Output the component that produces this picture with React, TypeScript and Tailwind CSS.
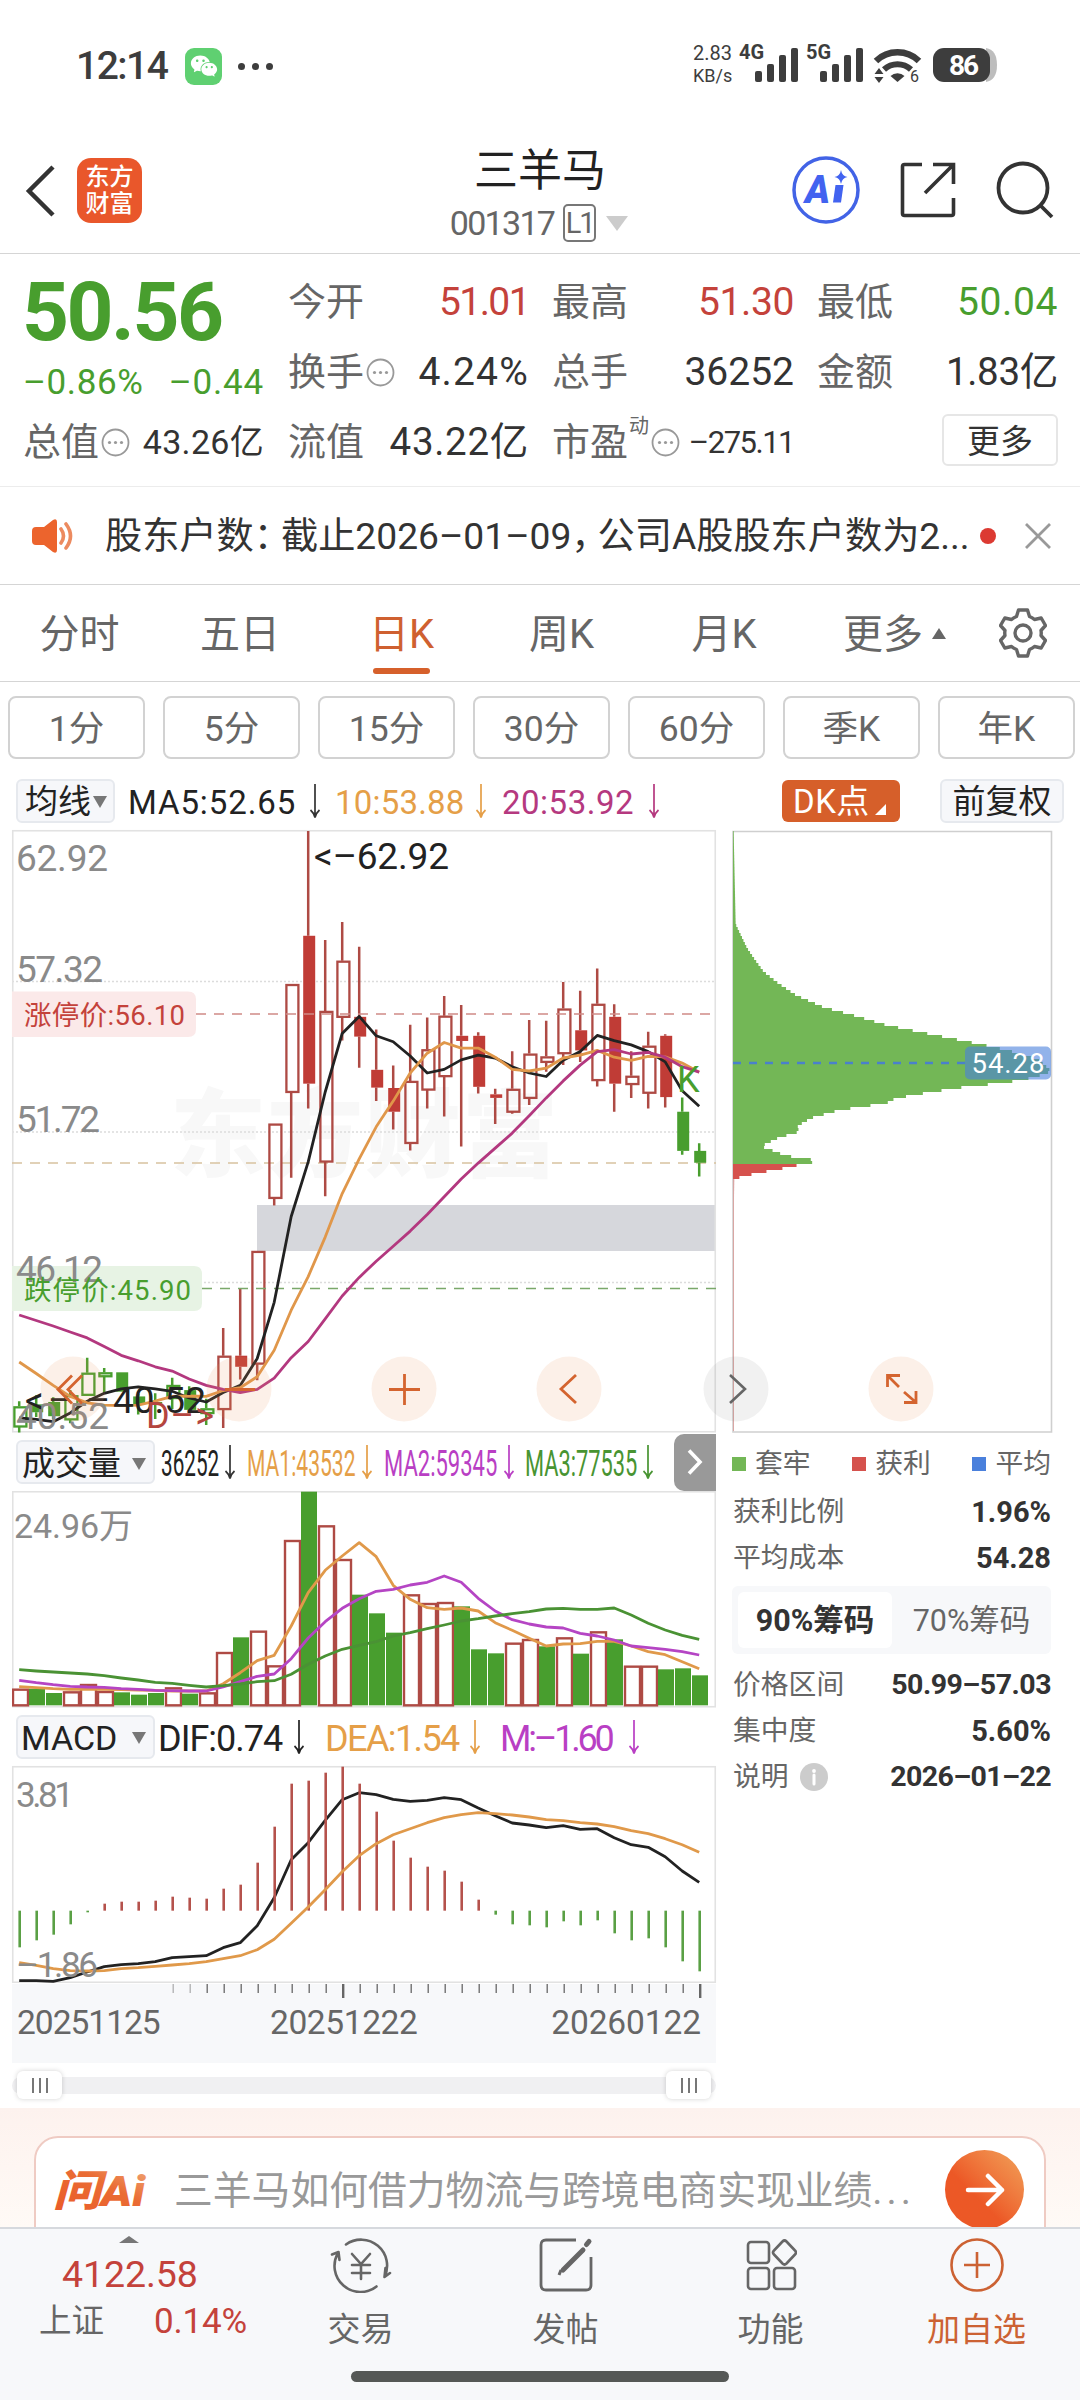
import React from 'react';
import { AiFillWechat } from 'react-icons/ai';

type Candle = [string, number, number, number, number];

// kind (u: hollow red, d: solid red, g: solid green, h: hollow green), high, body top, body bottom, low
const candles: Candle[] = [
  ['h', 1470, 1483, 1534, 1549],
  ['g', 1455, 1478, 1498, 1510],
  ['g', 1460, 1472, 1508, 1515],
  ['h', 1442, 1455, 1516, 1526],
  ['h', 1360, 1398, 1454, 1455],
  ['h', 1386, 1397, 1407, 1450],
  ['g', 1397, 1397, 1446, 1446],
  ['g', 1452, 1458, 1478, 1504],
  ['g', 1450, 1472, 1476, 1515],
  ['h', 1411, 1429, 1462, 1490],
  ['g', 1432, 1442, 1492, 1494],
  ['h', 1464, 1488, 1500, 1530],
  ['u', 1285, 1355, 1490, 1538],
  ['d', 1185, 1355, 1383, 1415],
  ['u', 1090, 1090, 1375, 1417],
  ['u', 768, 768, 956, 975],
  ['u', 415, 415, 688, 905],
  ['d', 28, 293, 667, 730],
  ['u', 304, 483, 864, 952],
  ['u', 258, 356, 498, 558],
  ['d', 321, 498, 548, 627],
  ['d', 530, 632, 677, 711],
  ['d', 621, 678, 738, 783],
  ['u', 518, 660, 817, 836],
  ['u', 500, 580, 682, 730],
  ['u', 445, 495, 648, 750],
  ['d', 468, 546, 559, 826],
  ['d', 537, 546, 675, 692],
  ['d', 680, 694, 703, 769],
  ['u', 585, 680, 738, 743],
  ['u', 506, 591, 703, 721],
  ['u', 508, 598, 612, 637],
  ['u', 410, 477, 590, 620],
  ['d', 432, 532, 583, 612],
  ['u', 376, 465, 658, 674],
  ['d', 466, 498, 667, 738],
  ['u', 585, 647, 668, 703],
  ['u', 536, 571, 690, 730],
  ['d', 542, 546, 701, 727],
  ['g', 702, 738, 837, 847],
  ['g', 818, 837, 867, 902],
];

const ma5 = [
  1512, 1516, 1522, 1500, 1470, 1450, 1439, 1434, 1439, 1445, 1462, 1472, 1448, 1430, 1362, 1220, 1003, 865, 688, 540,
  497, 546, 561, 597, 640, 631, 607, 595, 602, 624, 640, 649, 608, 586, 545, 558, 569, 586, 612, 685, 724,
];
const ma10 = [
  1371, 1400, 1430, 1458, 1474, 1480, 1481, 1480, 1470, 1458, 1457, 1458, 1443, 1436, 1408, 1341, 1240, 1155, 1055,
  945, 857, 776, 711, 640, 590, 563, 577, 577, 600, 631, 635, 628, 602, 595, 583, 600, 608, 598, 599, 615, 638,
];
const ma20 = [
  1252, 1266, 1280, 1295, 1310, 1332, 1354, 1368, 1383, 1394, 1414, 1430, 1440, 1448, 1440, 1412, 1360, 1319, 1262,
  1204, 1157, 1116, 1078, 1040, 998, 953, 908, 868, 830, 792, 748, 703, 660, 620, 586, 581, 592, 588, 600, 624, 638,
];

const volumes = [
  778, 778, 791, 786, 764, 785, 789, 796, 791, 774, 793, 789, 668, 624, 604, 708, 332, 187, 288, 389, 496, 552, 610,
  495, 521, 518, 531, 660, 672, 640, 629, 651, 624, 673, 606, 630, 709, 709, 720, 717, 738,
];
const volumeKinds = 'ugguuuggguguuguuuguuggguuuggguuguguguuggg';
const volMa1 = [
  772, 775, 778, 780, 780, 780, 781, 782, 783, 785, 785, 785, 763, 730, 694, 678, 590, 490, 423, 380, 340, 382, 468,
  510, 535, 540, 536, 545, 580, 603, 627, 650, 644, 643, 636, 636, 650, 667, 676, 697, 718,
];
const volMa2 = [
  753, 760, 766, 771, 773, 774, 778, 780, 783, 784, 785, 785, 773, 757, 741, 734, 688, 626, 577, 537, 508, 486, 480,
  467, 459, 440, 459, 507, 545, 571, 584, 593, 596, 612, 620, 632, 650, 655, 660, 667, 677,
];
const volMa3 = [
  721, 725, 728, 731, 734, 739, 746, 752, 759, 762, 768, 773, 769, 764, 757, 754, 735, 705, 680, 660, 648, 637, 620,
  610, 598, 587, 575, 568, 560, 553, 547, 539, 537, 540, 540, 536, 557, 582, 602, 618, 630,
];

const macd = [
  743, 722, 705, 674, 638, 612, 606, 606, 603, 591, 594, 597, 567, 555, 489, 381, 252, 243, 219, 201, 252, 336, 423,
  474, 501, 513, 546, 600, 645, 674, 677, 683, 665, 677, 662, 701, 722, 716, 743, 785, 815,
];
const dif = [
  843, 843, 845, 834, 817, 801, 795, 792, 786, 774, 771, 768, 744, 729, 678, 594, 480, 429, 362, 300, 279, 285, 299,
  305, 302, 294, 300, 325, 348, 370, 376, 384, 378, 389, 387, 414, 435, 443, 471, 514, 548,
];
const dea = [
  789, 797, 807, 813, 814, 813, 807, 804, 800, 796, 792, 786, 777, 768, 750, 719, 671, 622, 570, 516, 468, 432, 405,
  387, 369, 354, 345, 339, 342, 346, 352, 360, 363, 369, 373, 381, 393, 402, 417, 435, 458,
];

// cost distribution outline: [level, width]
const chips: [number, number][] = [
  [28, 2], [260, 8], [320, 42], [350, 66], [380, 92], [410, 137], [440, 190], [470, 272], [490, 360], [515, 460],
  [535, 575], [570, 780], [585, 852], [600, 912], [620, 940], [632, 955], [645, 912], [655, 862], [662, 800],
  [672, 692], [685, 590], [700, 490], [706, 474], [712, 462], [720, 400], [730, 320], [740, 277], [750, 235],
  [770, 194], [785, 198], [800, 137], [812, 107], [822, 84], [830, 112], [845, 157], [852, 208], [856, 242],
  [862, 242], [866, 210], [872, 182], [880, 135], [890, 70], [898, 30], [904, 4], [950, 3], [1547, 3],
];

const xAt = (i: number) => 7.2 + 17 * i;
const priceY = (v: number) => (v - 25.5) / 2.529;
const volY = (v: number) => (v - 185) / 3;
const macdY = (v: number) => (v - 199) / 3;

const toPoints = (values: number[], y: (v: number) => number) =>
  values.map((v, i) => `${xAt(i)},${y(v).toFixed(1)}`).join(' ');

const RED = '#c03c36';
const RED_LINE = '#ae4a44';
const GREEN = '#489e2e';

function Line({ values, y, color }: { values: number[]; y: (v: number) => number; color: string }) {
  return <polyline points={toPoints(values, y)} fill="none" stroke={color} strokeWidth="2.8" strokeLinejoin="round" />;
}

function StatusBar() {
  return (
    <div className="flex h-[110px] items-start pl-[76px] pr-[83px] pt-[46px] text-[#3d3d3d]">
      <div className="flex h-10 items-center">
        <span className="w-[109px] text-[39px] font-medium leading-none tracking-[-1.500px]">12:14</span>
        <span className="flex h-[37px] w-[37px] items-center justify-center rounded-[9px] bg-[#5fd071] text-white">
          <AiFillWechat size={30} />
        </span>
        <span className="ml-4 flex gap-[7px]">
          <i className="h-[7px] w-[7px] rounded-full bg-[#3d3d3d]" />
          <i className="h-[7px] w-[7px] rounded-full bg-[#3d3d3d]" />
          <i className="h-[7px] w-[7px] rounded-full bg-[#3d3d3d]" />
        </span>
      </div>
      <div className="ml-auto flex h-10 items-start">
        <div className="w-[46px]">
          <div className="text-[20px] leading-[15px]">2.83</div>
          <div className="mt-[7px] text-[18px] leading-[16px]">KB/s</div>
        </div>
        <svg width="258" height="40" viewBox="739 46 258 40" fill="#3d3d3d" className="overflow-visible">
          <text x="739" y="59" fontSize="20" fontWeight="700">4G</text>
          <rect x="755" y="71" width="7" height="11" rx="2" />
          <rect x="767" y="64" width="7" height="18" rx="2" />
          <rect x="779" y="55" width="7" height="27" rx="2" />
          <rect x="791" y="48" width="7" height="34" rx="2" />
          <text x="806" y="59" fontSize="20" fontWeight="700">5G</text>
          <rect x="820" y="71" width="7" height="11" rx="2" />
          <rect x="832" y="64" width="7" height="18" rx="2" />
          <rect x="844" y="55" width="7" height="27" rx="2" />
          <rect x="856" y="48" width="7" height="34" rx="2" />
          <path d="M876 61a31 31 0 0 1 43 0" fill="none" stroke="#3d3d3d" strokeWidth="6.5" />
          <path d="M884 69.500a20 20 0 0 1 27 0" fill="none" stroke="#3d3d3d" strokeWidth="6" />
          <path d="M890.500 76a10 10 0 0 1 14 0l-7 6z" />
          <path d="M879 68l4.500 6h-9zM879 83l4.500-6h-9z" />
          <text x="910" y="82" fontSize="16">6</text>
          <path d="M986 48q11 2 11 17t-11 17z" fill="#bdbdbd" />
          <rect x="933" y="48" width="57" height="34" rx="11" />
          <text x="949" y="75" fontSize="28" fontWeight="700" fill="#fff" textLength="30">86</text>
        </svg>
      </div>
    </div>
  );
}

function Header() {
  return (
    <header className="flex h-[144px] items-start border-b border-[#d5d5d5]">
      <div className="flex w-[400px] items-center pl-[25px] pt-[48px]">
        <svg width="30" height="64" viewBox="0 0 30 52" fill="none" stroke="#333" strokeWidth="4.500">
          <path d="M28 2L4 26l24 24" />
        </svg>
        <div className="ml-[22px] flex h-[65px] w-[65px] flex-col items-center justify-center rounded-[14px] bg-[#e9572b] text-[24px] font-medium leading-[27px] text-white">
          <span>东方</span>
          <span>财富</span>
        </div>
      </div>
      <div className="flex flex-1 flex-col items-center pt-[39px]">
        <h1 className="text-[44px] leading-[44px] text-[#222]">三羊马</h1>
        <div className="mt-[11px] flex h-[38px] items-center pr-[2px] text-[34px] leading-none text-[#666]">
          <span className="tracking-[-1.700px]">001317</span>
          <span className="ml-[9px] flex h-[38px] w-[33px] items-center justify-center rounded-[5px] border-2 border-[#777] text-[29px] tracking-[-2px]">
            L1
          </span>
          <svg className="ml-[10px]" width="22" height="15" viewBox="0 0 22 15">
            <path d="M0 0h22L11 15z" fill="#ccc" />
          </svg>
        </div>
      </div>
      <div className="flex w-[400px] items-center justify-end gap-[40px] pr-[26px] pt-[46px]">
        <svg width="68" height="68" viewBox="0 0 68 68">
          <circle cx="34" cy="34" r="32" fill="none" stroke="#4263e6" strokeWidth="3.500" />
          <text x="13" y="46.500" fontSize="38" fontWeight="900" fontStyle="italic" fill="#4263f0">A</text>
          <path d="M43.500 29h8l-2.500 17.500h-8z" fill="#4263f0" />
          <path d="M49 14q1 6 6.500 7-5.500 1-6.500 7-1-6-6.500-7 5.500-1 6.500-7z" fill="#4263f0" />
        </svg>
        <svg width="56" height="56" viewBox="0 0 56 56" fill="none" stroke="#333" strokeWidth="3.600">
          <path d="M22 2.500H4.500q-2 0-2 2v47q0 2 2 2h47q2 0 2-2V36M33 2.500h20.500V22M53 3L25 31" />
        </svg>
        <svg width="58" height="58" viewBox="0 0 58 58" fill="none" stroke="#333" strokeWidth="3.800">
          <circle cx="27" cy="27" r="24.500" />
          <path d="M44 44l12 12" />
        </svg>
      </div>
    </header>
  );
}

function Dots() {
  return (
    <svg className="ml-[2px]" width="29" height="29" viewBox="0 0 29 29" fill="#999">
      <circle cx="14.500" cy="14.500" r="13" fill="none" stroke="#999" strokeWidth="1.800" />
      <circle cx="8.500" cy="14.500" r="1.600" />
      <circle cx="14.500" cy="14.500" r="1.600" />
      <circle cx="20.500" cy="14.500" r="1.600" />
    </svg>
  );
}

function Quote() {
  return (
    <section className="flex h-[233px] border-b border-[#ececec] pl-[23px] pr-[22px] pt-[13px] text-[38px] leading-none text-[#666]">
      <div className="w-[241px] text-[#489e2e]">
        <div className="-ml-[1px] flex h-[90px] items-center text-[82px] font-bold tracking-[-2.500px]">50.56</div>
        <div className="flex h-[50px] items-center justify-between text-[35px]">
          <span className="tracking-[0.600px]">–0.86%</span>
          <span className="tracking-[0.800px]">–0.44</span>
        </div>
        <div className="flex h-[70px] items-center text-[#666]">
          <span>总值</span>
          <Dots />
          <span className="ml-auto text-[34px] tracking-[0.300px] text-[#333]">43.26亿</span>
        </div>
      </div>
      <div className="ml-[24px] w-[241px]">
        <div className="flex h-[70px] items-center justify-between">
          <span>今开</span>
          <span className="text-[39px] tracking-[-1.600px] text-[#c4423b]">51.01</span>
        </div>
        <div className="flex h-[70px] items-center">
          <span>换手</span>
          <Dots />
          <span className="ml-auto text-[39px] tracking-[1.200px] text-[#333]">4.24%</span>
        </div>
        <div className="flex h-[70px] items-center justify-between">
          <span>流值</span>
          <span className="text-[38.500px] tracking-[0.700px] text-[#333]">43.22亿</span>
        </div>
      </div>
      <div className="ml-[23px] w-[242px]">
        <div className="flex h-[70px] items-center justify-between">
          <span>最高</span>
          <span className="text-[39px] tracking-[-0.400px] text-[#c4423b]">51.30</span>
        </div>
        <div className="flex h-[70px] items-center justify-between">
          <span>总手</span>
          <span className="text-[39px] text-[#333]">36252</span>
        </div>
        <div className="flex h-[70px] items-center">
          <span>市盈</span>
          <span className="-mt-[32px] ml-[1px] text-[20px]">动</span>
          <Dots />
          <span className="ml-auto text-[31px] tracking-[-1.500px] text-[#333]">–275.11</span>
        </div>
      </div>
      <div className="ml-[23px] flex-1">
        <div className="flex h-[70px] items-center justify-between">
          <span>最低</span>
          <span className="text-[39px] tracking-[0.600px] text-[#489e2e]">50.04</span>
        </div>
        <div className="flex h-[70px] items-center justify-between">
          <span>金额</span>
          <span className="text-[38.500px] tracking-[-0.300px] text-[#333]">1.83亿</span>
        </div>
        <div className="flex h-[70px] items-center justify-end">
          <button className="-mt-[4px] h-[52px] w-[116px] rounded-[6px] border-2 border-[#e6e6e6] pt-[2px] text-[33px] text-[#333]">更多</button>
        </div>
      </div>
    </section>
  );
}

function News() {
  return (
    <div className="flex h-[98px] items-center border-b border-[#d5d5d5] pl-[32px] pr-[29px] leading-none text-[#333]">
      <svg width="42" height="34" viewBox="0 0 42 34">
        <path d="M4 8h8L21 1q4-2 4 2v28q0 4-4 2l-9-7H4q-4 0-4-4V12q0-4 4-4z" fill="#ec642d" />
        <path d="M29 10q5 7 0 14M34 5q9 12 0 24" fill="none" stroke="#ec8a5f" strokeWidth="3.600" strokeLinecap="round" />
      </svg>
      <span className="ml-[31px] mt-[2px] w-[866px] whitespace-nowrap text-[37.200px]">
        股东户数<span className="-mr-[10px]">：</span>截止2026–01–09<span className="-mr-[11px]">，</span>公司A股股东户数为2...
      </span>
      <i className="ml-[9px] h-[16px] w-[16px] rounded-full bg-[#dc3a32]" />
      <svg className="ml-auto" width="26" height="26" viewBox="0 0 26 26" stroke="#999" strokeWidth="2.800">
        <path d="M1 1l24 24M25 1L1 25" />
      </svg>
    </div>
  );
}

const tabs = [
  { label: '分时', cls: 'w-[159px]' },
  { label: '五日', cls: 'w-[162px]' },
  { label: '日K', cls: 'w-[161px]' },
  { label: '周K', cls: 'w-[159px]' },
  { label: '月K', cls: 'w-[166px]' },
];

function Tabs() {
  return (
    <nav className="flex h-[97px] items-center border-b border-[#d5d5d5] text-[40px] leading-none text-[#666]">
      {tabs.map(({ label, cls }) => (
        <div key={label} className={`${cls} relative flex h-full items-center justify-center pt-[4px]`}>
          <span className={label === '日K' ? 'text-[#cf6030]' : ''}>{label}</span>
          {label === '日K' && <i className="absolute bottom-[7px] h-[6px] w-[57px] rounded-full bg-[#d6602b]" />}
        </div>
      ))}
      <div className="ml-[36px] flex items-center pt-[4px]">
        <span>更多</span>
        <svg className="-mt-[4px] ml-[9px]" width="14" height="11" viewBox="0 0 14 11">
          <path d="M7 0l7 11H0z" fill="#666" />
        </svg>
      </div>
      <svg className="ml-auto mr-[33px]" width="48" height="50" viewBox="0 0 48 50" fill="none" stroke="#666" strokeWidth="3.400" strokeLinejoin="round">
        <path d="M19.500 2h9l2 6.500q3 1.200 5 3l6.700-1.500 4.300 7.500-4.500 5q.500 2.500 0 5l4.500 5-4.300 7.500-6.700-1.500q-2 1.800-5 3l-2 6.500h-9l-2-6.500q-3-1.200-5-3L5.800 40 1.500 32.500l4.500-5q-.500-2.500 0-5l-4.500-5L5.800 10l6.700 1.500q2-1.800 5-3z" />
        <circle cx="24" cy="25" r="8" />
      </svg>
    </nav>
  );
}

const periods = ['1分', '5分', '15分', '30分', '60分', '季K', '年K'];

function Periods() {
  return (
    <div className="flex gap-[18px] pl-[8px] pt-[14px]">
      {periods.map((p) => (
        <button key={p} className="h-[63px] w-[137px] shrink-0 rounded-[8px] border-2 border-[#d2d2d2] pt-[4px] text-[35.500px] leading-none text-[#666]">
          {p}
        </button>
      ))}
    </div>
  );
}

function Arrow({ color = '#333', className = '' }: { color?: string; className?: string }) {
  return (
    <svg className={`${className} shrink-0`} width="12" height="36" viewBox="0 0 12 36" fill="none" stroke={color} strokeWidth="1.700">
      <path d="M6 1v33M1.500 27Q5 30 6 34.500 7 30 10.500 27" />
    </svg>
  );
}

function Triangle() {
  return (
    <svg width="14" height="12" viewBox="0 0 14 12">
      <path d="M0 0h14L7 12z" fill="#777" />
    </svg>
  );
}

function MaLegend() {
  return (
    <div className="flex h-[71px] items-center pl-[16px] pr-[16px] pt-[12px] text-[33px] leading-none text-[#222]">
      <div className="flex h-[44px] w-[99px] items-center justify-between rounded-[6px] border-2 border-[#e6e9ee] bg-[#f6f7fa] pl-[7px] pr-[6px] pt-[2px]">
        <span>均线</span>
        <Triangle />
      </div>
      <span className="ml-[13px] mt-[3px] w-[172px] whitespace-nowrap tracking-[0.900px]">MA5:52.65</span>
      <Arrow className="ml-[9px]" />
      <span className="ml-[14px] mt-[3px] w-[132px] whitespace-nowrap tracking-[0.200px] text-[#e59f48]">10:53.88</span>
      <Arrow className="ml-[8px]" color="#e59f48" />
      <span className="ml-[15px] mt-[3px] w-[136px] whitespace-nowrap tracking-[0.500px] text-[#b5397f]">20:53.92</span>
      <Arrow className="ml-[10px]" color="#b5397f" />
      <div className="ml-auto flex h-[42px] w-[118px] items-center rounded-[6px] bg-[#d65f2a] pl-[11px] pt-[2px] text-white">
        <span className="tracking-[0.500px]">DK点</span>
        <svg className="ml-[5px] mt-[16px]" width="11" height="11" viewBox="0 0 11 11">
          <path d="M11 0v11H0z" fill="#fff" />
        </svg>
      </div>
      <div className="ml-[40px] flex h-[44px] w-[124px] items-center justify-center rounded-[6px] border-2 border-[#e6e9ee] bg-[#f6f7fa] pt-[2px]">
        前复权
      </div>
    </div>
  );
}

function CandleChart() {
  return (
    <svg width="704" height="603" viewBox="0 0 704 603" className="block overflow-visible">
      <text x="158" y="339" fontSize="96" fontWeight="900" fill="#f8f8f8" textLength="388">东方财富</text>
      <g stroke="#dcdcdc" strokeWidth="1.300" strokeDasharray="2 2">
        <path d="M0 151.500h704M0 302h704M0 452.500h704" />
      </g>
      <rect x="245" y="375" width="459" height="46" fill="#d6d7dc" />
      <rect x="0.750" y="0.750" width="702.500" height="601" fill="none" stroke="#e2e2e2" strokeWidth="1.600" />
      <path d="M0 333h704" stroke="#d8c2a0" strokeWidth="1.400" strokeDasharray="10 8" />
      {candles.map(([kind, high, top, bottom, low], i) => {
        const x = xAt(i) + 0.5;
        const green = kind === 'g' || kind === 'h';
        const hollow = kind === 'u' || kind === 'h';
        const line = green ? GREEN : RED_LINE;
        return (
          <g key={i}>
            <path
              d={`M${x - 0.5} ${priceY(high)}V${priceY(top)}M${x - 0.5} ${priceY(bottom)}V${priceY(low)}`}
              stroke={line}
              strokeWidth="2.500"
            />
            {hollow ? (
              <rect x={x - 5.3} y={priceY(top) + 1} width="12" height={Math.max(priceY(bottom) - priceY(top) - 1, 2)} fill="none" stroke={line} strokeWidth="2.300" />
            ) : (
              <rect x={x - 5.5} y={priceY(top)} width="12" height={priceY(bottom) - priceY(top)} fill={green ? GREEN : RED} />
            )}
          </g>
        );
      })}
      <path d="M184 184h520" stroke="#cf8a86" strokeWidth="1.300" strokeDasharray="10 8" />
      <path d="M190 458.500h514" stroke="#7aa86a" strokeWidth="1.300" strokeDasharray="10 8" />
      <path d="M0 161.500h176q8 0 8 8V199q0 8-8 8H0z" fill="#fbe9e9" />
      <path d="M0 436h182q8 0 8 8v29q0 8-8 8H0z" fill="#e7f3e4" />
      <g fontSize="37" fill="#8a8a8a">
        <text x="4" y="41" textLength="92">62.92</text>
        <text x="4" y="152" textLength="87">57.32</text>
        <text x="4" y="302" textLength="84">51.72</text>
        <text x="4" y="452" textLength="87">46.12</text>
      </g>
      <text x="12" y="195" fontSize="27.500" fill="#c4423b" textLength="161">涨停价:56.10</text>
      <text x="12" y="469.500" fontSize="27.500" fill="#489e2e" textLength="167">跌停价:45.90</text>
      <Line values={ma5} y={priceY} color="#222" />
      <Line values={ma10} y={priceY} color="#e0974a" />
      <Line values={ma20} y={priceY} color="#b3387f" />
      <text x="302" y="39" fontSize="37" fill="#222" textLength="135">&lt;–62.92</text>
      <text x="4" y="599" fontSize="37" fill="#8a8a8a" textLength="93">40.52</text>
      <text x="13" y="583" fontSize="37" fill="#222">
        &lt;<tspan x="36">–</tspan><tspan x="74">–</tspan><tspan x="101">40.52</tspan>
      </text>
      <text x="134" y="598" fontSize="36" fill="#b4453f" textLength="68">D–&gt;</text>
      <text x="665" y="262" fontSize="36" fill="#489e2e">K</text>
    </svg>
  );
}

function ChipChart() {
  const bars: { y: number; w: number; green: boolean }[] = [];
  for (let v = 28; v < 1543; v += 7.587) {
    const k = Math.max(1, chips.findIndex(([lv]) => lv >= v));
    const [v0, w0] = chips[k - 1];
    const [v1, w1] = chips[k];
    bars.push({ y: Math.round(priceY(v)), w: (w0 + ((w1 - w0) * (v - v0)) / (v1 - v0)) / 3, green: v < 866 });
  }
  return (
    <svg width="321" height="603" viewBox="0 0 321 603" className="block">
      <path d="M1 602V1.500h318.500V602z" fill="none" stroke="#cfcfcf" strokeWidth="1.600" />
      {bars.map(({ y, w, green }) => (
        <rect key={y} x="1" y={y} width={w} height="3" fill={green ? '#73b756' : w > 1.5 ? '#d5524d' : '#d9a5a3'} />
      ))}
      <path d="M1 233h233" stroke="#4a80cc" strokeWidth="2.400" strokeDasharray="8 8" />
      <rect x="233" y="216.500" width="86" height="33" rx="5" fill="#4a80dc" fillOpacity="0.600" />
      <text x="239.500" y="243" fontSize="27.500" fill="#fff" textLength="73">54.28</text>
    </svg>
  );
}

function Toolbar() {
  return (
    <svg className="absolute left-[40px] top-[526px]" width="894" height="66" viewBox="40 1356 894 66" fill="none">
      <g fill="#e8965c" fillOpacity="0.140">
        <circle cx="73" cy="1389" r="32.500" />
        <circle cx="239" cy="1389" r="32.500" />
        <circle cx="404" cy="1389" r="32.500" />
        <circle cx="569" cy="1389" r="32.500" />
        <circle cx="901" cy="1389" r="32.500" />
      </g>
      <circle cx="736" cy="1389" r="32.500" fill="#777" fillOpacity="0.100" />
      <g stroke="#d4642f" strokeWidth="2.800">
        <path d="M72 1375.500l-14 14 14 14M82 1375.500l-14 14 14 14" />
        <path d="M225 1389.500h30M389 1389.500h31M404.500 1374v31M576 1375l-15 14 15 14" />
        <path d="M887.500 1387v-11.500H900M888 1376l11 11M904 1402.500h12V1391M904 1392l11.500 10" />
      </g>
      <path d="M730 1375l15 14-15 14" stroke="#666" strokeWidth="2.600" />
    </svg>
  );
}

function VolumeLegend() {
  return (
    <div className="flex h-[58px] items-center text-[37px] leading-none">
      <div className="ml-[4px] flex h-[44px] w-[139px] items-center justify-between rounded-[6px] border-2 border-[#e6e9ee] bg-[#f6f7fa] pl-[4px] pr-[7px] pt-[3px] text-[33px] text-[#222]">
        <span>成交量</span>
        <Triangle />
      </div>
      <span className="ml-[6px] mt-[2px] w-[58px] whitespace-nowrap text-[#222]">
        <span className="inline-block origin-left scale-x-[0.560]">36252</span>
      </span>
      <Arrow className="ml-[5px]" />
      <span className="ml-[11px] mt-[2px] w-[110px] whitespace-nowrap text-[#e59f48]">
        <span className="inline-block origin-left scale-x-[0.570]">MA1:43532</span>
      </span>
      <Arrow className="ml-[4px]" color="#e59f48" />
      <span className="ml-[11px] mt-[2px] w-[115px] whitespace-nowrap text-[#b93fc4]">
        <span className="inline-block origin-left scale-x-[0.595]">MA2:59345</span>
      </span>
      <Arrow className="ml-[4px]" color="#b93fc4" />
      <span className="ml-[10px] mt-[2px] w-[111px] whitespace-nowrap text-[#489432]">
        <span className="inline-block origin-left scale-x-[0.590]">MA3:77535</span>
      </span>
      <Arrow className="ml-[6px]" color="#489432" />
      <div className="ml-auto flex h-[57px] w-[42px] items-center justify-center rounded-l-[10px] bg-[#999]">
        <svg width="16" height="26" viewBox="0 0 16 26" fill="none" stroke="#fff" strokeWidth="3.600">
          <path d="M2 1.500L13 13 2 24.500" />
        </svg>
      </div>
    </div>
  );
}

function VolumeChart() {
  return (
    <svg width="704" height="217" viewBox="0 0 704 217" className="block">
      <rect x="0.750" y="0.750" width="702.500" height="215" fill="none" stroke="#e2e2e2" strokeWidth="1.600" />
      <text x="2" y="47" fontSize="34" fill="#8a8a8a" textLength="119">24.96万</text>
      {volumes.map((v, i) =>
        volumeKinds[i] === 'u' ? (
          <rect key={i} x={i * 17 + 1} y={volY(v) + 1} width="15" height={volY(828) - volY(v) - 1} fill="#fff" stroke={RED_LINE} strokeWidth="2.400" />
        ) : (
          <rect key={i} x={i * 17} y={volY(v)} width="16" height={volY(828) - volY(v)} fill={GREEN} />
        ),
      )}
      <Line values={volMa1} y={volY} color="#e0994a" />
      <Line values={volMa2} y={volY} color="#b545c4" />
      <Line values={volMa3} y={volY} color="#4a9234" />
    </svg>
  );
}

function MacdLegend() {
  return (
    <div className="flex h-[58px] items-center text-[36px] leading-none">
      <div className="ml-[4px] flex h-[44px] w-[139px] items-center justify-between rounded-[6px] border-2 border-[#e6e9ee] bg-[#f6f7fa] pl-[3px] pr-[7px] pt-[2px] text-[34px] text-[#222]">
        <span>MACD</span>
        <Triangle />
      </div>
      <span className="ml-[3px] mt-[3px] w-[125px] whitespace-nowrap tracking-[-1px] text-[#222]">DIF:0.74</span>
      <Arrow className="ml-[10px]" color="#222" />
      <span className="ml-[20px] mt-[3px] w-[133px] whitespace-nowrap tracking-[-1.600px] text-[#e59f48]">DEA:1.54</span>
      <Arrow className="ml-[11px]" color="#e59f48" />
      <span className="ml-[19px] mt-[3px] w-[116px] whitespace-nowrap tracking-[-3.200px] text-[#b93fc4]">M:–1.60</span>
      <Arrow className="ml-[12px]" color="#b93fc4" />
    </div>
  );
}

function MacdChart() {
  return (
    <svg width="704" height="218" viewBox="0 0 704 218" className="block overflow-visible">
      <rect x="0.750" y="0.750" width="702.500" height="215.500" fill="none" stroke="#e2e2e2" strokeWidth="1.600" />
      <Line values={dif} y={macdY} color="#222" />
      {macd.map((v, i) => (
        <path key={i} d={`M${xAt(i) + 0.5} ${macdY(633)}V${macdY(v)}`} stroke={v > 633 ? '#5aa045' : '#b5524c'} strokeWidth="2.600" />
      ))}
      <Line values={dea} y={macdY} color="#e0994a" />
      <text x="4" y="41" fontSize="35" fill="#8a8a8a" textLength="58">3.81</text>
      <text x="4" y="211" fontSize="35" fill="#8a8a8a" textLength="82">–1.86</text>
    </svg>
  );
}

function DateAxis() {
  return (
    <div className="h-[79px] bg-[#f7f8fa]">
      <svg width="704" height="15" viewBox="0 0 704 15" className="block" stroke="#666">
        {volumes.map((_, i) => {
          const major = i === 19 || i === 40;
          return i > 8 ? (
            <path key={i} d={`M${xAt(i) + 1} 0v${major ? 14 : 9}`} strokeWidth={major ? 2.4 : 1.3} strokeOpacity={i < 11 ? 0.5 : 1} />
          ) : null;
        })}
      </svg>
      <div className="flex pl-[5px] pr-[15px] pt-[5px] text-[33.500px] leading-[38px] text-[#666]">
        <span className="w-[253px] tracking-[-1px]">20251125</span>
        <span className="tracking-[-0.400px]">20251222</span>
        <span className="ml-auto tracking-[-0.100px]">20260122</span>
      </div>
    </div>
  );
}

function Handle() {
  return (
    <div className="flex h-[28px] w-[45px] items-center justify-center gap-[5px] rounded-[6px] bg-white shadow-[0_0_5px_rgba(0,0,0,0.180)]">
      <i className="h-[15px] w-[2px] bg-[#777]" />
      <i className="h-[15px] w-[2px] bg-[#777]" />
      <i className="h-[15px] w-[2px] bg-[#777]" />
    </div>
  );
}

const rowsTop = [
  ['获利比例', '1.96%'],
  ['平均成本', '54.28'],
];

function ChipStats() {
  return (
    <div className="w-[319px] text-[27.800px] leading-none text-[#666]">
      <div className="flex h-[56px] items-center justify-between pt-[6px]">
        <span className="flex items-center gap-[9px]"><i className="h-[14px] w-[14px] bg-[#73b756]" />套牢</span>
        <span className="flex items-center gap-[9px]"><i className="h-[14px] w-[14px] bg-[#d5524d]" />获利</span>
        <span className="flex items-center gap-[9px]"><i className="h-[14px] w-[14px] bg-[#4a80dc]" />平均</span>
      </div>
      {rowsTop.map(([label, value]) => (
        <div key={label} className="flex h-[46px] items-center justify-between pl-[1px]">
          <span>{label}</span>
          <span className="text-[29px] font-bold text-[#333]">{value}</span>
        </div>
      ))}
      <div className="mt-[5px] flex h-[68px] items-center rounded-[6px] bg-[#f7f8fa] pl-[6px] text-[30.500px]">
        <span className="flex h-[56px] w-[154px] items-center justify-center rounded-[6px] bg-white pt-[3px] font-bold text-[#333]">90%筹码</span>
        <span className="flex-1 pt-[3px] text-center">70%筹码</span>
      </div>
      <div className="mt-[8px] flex h-[46px] items-center justify-between pl-[1px]">
        <span>价格区间</span>
        <span className="text-[28.500px] font-bold tracking-[-0.500px] text-[#333]">50.99–57.03</span>
      </div>
      <div className="flex h-[46px] items-center justify-between pl-[1px]">
        <span>集中度</span>
        <span className="text-[29px] font-bold text-[#333]">5.60%</span>
      </div>
      <div className="flex h-[46px] items-center pl-[1px]">
        <span>说明</span>
        <svg className="ml-[11px]" width="28" height="28" viewBox="0 0 28 28">
          <circle cx="14" cy="14" r="14" fill="#ccc" />
          <circle cx="14" cy="8" r="1.900" fill="#fff" />
          <path d="M14 12v9" stroke="#fff" strokeWidth="3" strokeLinecap="round" />
        </svg>
        <span className="ml-auto text-[28.500px] font-bold tracking-[-0.600px] text-[#333]">2026–01–22</span>
      </div>
    </div>
  );
}

function AskAi() {
  return (
    <div className="h-[119px] overflow-hidden bg-gradient-to-b from-[#fdf2ee] to-[#fffaf6] px-[34px] pt-[28px]">
      <div className="flex h-[130px] items-start rounded-t-[24px] border-2 border-[#efcbc3] bg-white pl-[18px] pr-[20px] pt-[12px]">
        <div className="flex h-[80px] w-[120px] items-center">
          <svg width="96" height="44" viewBox="0 0 96 44" className="overflow-visible">
            <defs>
              <linearGradient id="ask" x1="0" y1="1" x2="1" y2="0">
                <stop offset="0" stopColor="#ea5a28" />
                <stop offset="0.600" stopColor="#ea6c34" />
                <stop offset="1" stopColor="#f0a878" />
              </linearGradient>
            </defs>
            <text x="-1" y="38" fontSize="43" fontWeight="900" fontStyle="italic" fill="url(#ask)" textLength="92" lengthAdjust="spacingAndGlyphs">
              问Ai
            </text>
          </svg>
        </div>
        <span className="flex h-[80px] items-center whitespace-nowrap pt-[2px] text-[38.800px] leading-none text-[#999]">
          三羊马如何借力物流与跨境电商实现业绩
          <span className="tracking-[4px]">...</span>
        </span>
        <div className="ml-auto flex h-[79px] w-[79px] shrink-0 items-center justify-center rounded-full bg-gradient-to-tr from-[#ec5826] from-40% to-[#f0a25a]">
          <svg width="40" height="34" viewBox="0 0 40 34" fill="none" stroke="#fff" strokeWidth="4.500" strokeLinecap="round" strokeLinejoin="round">
            <path d="M3 17h34M23 3l14 14-14 14" />
          </svg>
        </div>
      </div>
    </div>
  );
}

function BottomNav() {
  return (
    <div className="h-[173px] border-t-2 border-[#d6d9de] bg-[#f7f8fa] leading-none text-[#666]">
      <div className="flex h-[125px]">
        <div className="w-[258px] pt-[7px]">
          <svg className="ml-[119px] block" width="20" height="7" viewBox="0 0 20 7">
            <path d="M10 0l10 7H0z" fill="#777" />
          </svg>
          <div className="mt-[13px] pl-[62px] text-[37.500px] tracking-[-0.100px] text-[#c4423b]">4122.58</div>
          <div className="mt-[10px] flex items-center pl-[39px]">
            <span className="text-[32.500px]">上证</span>
            <span className="ml-[50px] text-[35px] tracking-[-0.200px] text-[#c4423b]">0.14%</span>
          </div>
        </div>
        <div className="flex w-[205px] flex-col items-center gap-[20px] pt-[8px]">
          <svg width="62" height="56" viewBox="0 0 62 56" fill="none" stroke="#666" strokeWidth="2.600" strokeLinecap="round">
            <path d="M16 7.500A26 26 0 0 1 54.500 40M46.500 49.500A26 26 0 0 1 8 16M54.500 40l1-9M54.500 40l5.500-4M8.500 15L2 17.500M8.500 15l1 8" />
            <path d="M22 17l9 10 9-10M22 28h18M22 36h18M31 27v15" />
          </svg>
          <span className="text-[33px]">交易</span>
        </div>
        <div className="flex w-[205px] flex-col items-center gap-[20px] pt-[8px]">
          <svg width="56" height="56" viewBox="0 0 56 56" fill="none" stroke="#666" strokeWidth="2.800">
            <path d="M38 3H8Q3 3 3 8v40q0 5 5 5h40q5 0 5-5V20" />
            <path d="M48.500 7.500l2.500-3M45 13L25 33" strokeWidth="5" strokeLinecap="round" />
            <path d="M23 33l-2 5" strokeWidth="3" />
          </svg>
          <span className="text-[33px]">发帖</span>
        </div>
        <div className="flex w-[205px] flex-col items-center gap-[20px] pt-[8px]">
          <svg width="52" height="56" viewBox="0 0 52 56" fill="none" stroke="#666" strokeWidth="2.600">
            <rect x="3" y="5" width="21" height="21" rx="3" />
            <rect x="3" y="31" width="21" height="21" rx="3" />
            <rect x="29" y="31" width="21" height="21" rx="3" />
            <path d="M37.500 4.500q2-2 4 0l8.500 9q2 2 0 4l-8.500 9q-2 2-4 0l-8.500-9q-2-2 0-4z" />
          </svg>
          <span className="text-[33px]">功能</span>
        </div>
        <div className="flex w-[207px] flex-col items-center gap-[20px] pt-[8px] text-[#cc6233]">
          <svg width="56" height="56" viewBox="0 0 56 56" fill="none" stroke="#cc6233" strokeWidth="2.600">
            <circle cx="28" cy="28" r="25.500" />
            <path d="M28 15v26M15 28h26" />
          </svg>
          <span className="text-[33px]">加自选</span>
        </div>
      </div>
      <div className="mx-auto mt-[17px] h-[11px] w-[378px] rounded-full bg-[#555856]" />
    </div>
  );
}

export default function App() {
  return (
    <div className="h-[2400px] w-[1080px] overflow-hidden bg-white font-[Roboto,'Noto_Sans_CJK_SC',sans-serif]">
      <StatusBar />
      <Header />
      <Quote />
      <News />
      <Tabs />
      <Periods />
      <MaLegend />
      <div className="relative flex h-[1278px] pl-[12px]">
        <div className="w-[704px]">
          <CandleChart />
          <VolumeLegend />
          <VolumeChart />
          <MacdLegend />
          <MacdChart />
          <DateAxis />
          <div className="mt-[4px] flex h-[36px] items-center">
            <div className="flex h-[17px] w-full items-center justify-between rounded-full bg-[#f0f0f2] px-[5px]">
              <Handle />
              <Handle />
            </div>
          </div>
        </div>
        <div className="ml-[16px] w-[321px]">
          <ChipChart />
          <ChipStats />
        </div>
        <Toolbar />
      </div>
      <AskAi />
      <BottomNav />
    </div>
  );
}
